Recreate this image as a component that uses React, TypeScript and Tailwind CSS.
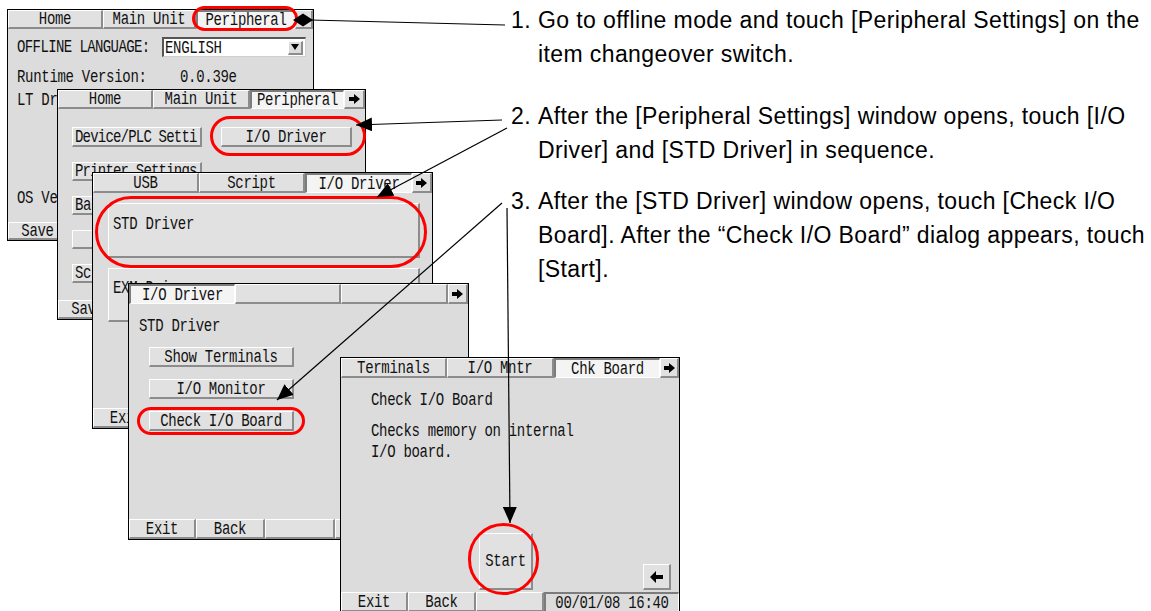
import React from "react";

const mono = "font-['Liberation_Mono','DejaVu_Sans_Mono',monospace]";
const raised =
  "border-t border-l border-t-white border-l-white border-b-2 border-r-2 border-b-[#8c8c8c] border-r-[#8c8c8c]";
const sunken =
  "border-t-2 border-l-2 border-t-[#7c7c7c] border-l-[#7c7c7c] border-b border-r border-b-white border-r-white";

type TabDef = { label?: string; w?: string; active?: boolean; arrow?: boolean };

function T({ children, cls = "" }: { children?: React.ReactNode; cls?: string }) {
  return <span className={`inline-block scale-y-[1.25] whitespace-pre ${cls}`}>{children}</span>;
}

function ArrowRight() {
  return (
    <svg width="11" height="10" viewBox="0 0 11 10">
      <path d="M0 3h5V0l6 5-6 5V7H0z" fill="#000" />
    </svg>
  );
}

function ArrowLeft() {
  return (
    <svg width="13" height="12" viewBox="0 0 13 12">
      <path d="M13 4H6V0L0 6l6 6V8h7z" fill="#000" />
    </svg>
  );
}

function TabRow({ tabs, h }: { tabs: TabDef[]; h: string }) {
  return (
    <div className={`flex shrink-0 ${h}`}>
      {tabs.map((t, i) => (
        <div
          key={i}
          className={`${t.w ?? "flex-1"} flex items-center justify-center overflow-hidden ${
            t.active ? "bg-[#f4f4f4] " + sunken : "bg-[#e1e1e1] " + raised
          }`}
        >
          {t.arrow ? <ArrowRight /> : <T>{t.label}</T>}
        </div>
      ))}
    </div>
  );
}

function BottomRow({ items, h = "h-[20px]" }: { items: TabDef[]; h?: string }) {
  return (
    <div className={`flex shrink-0 mt-auto ${h}`}>
      {items.map((t, i) => (
        <div
          key={i}
          className={`${t.w ?? "flex-1"} flex items-center justify-center overflow-hidden bg-[#e1e1e1] ${raised}`}
        >
          <T>{t.label}</T>
        </div>
      ))}
    </div>
  );
}

function Win({ pos, children }: { pos: string; children: React.ReactNode }) {
  return (
    <div
      className={`absolute ${pos} border border-black bg-[#dcdcdc] flex flex-col overflow-hidden ${mono} text-[14px] leading-[18px] tracking-[-0.3px] text-[#111]`}
    >
      {children}
    </div>
  );
}

function Btn({
  cls,
  children,
  left,
  tight,
}: {
  cls: string;
  children?: React.ReactNode;
  left?: boolean;
  tight?: boolean;
}) {
  return (
    <div
      className={`${cls} shrink-0 flex items-center overflow-hidden bg-[#e1e1e1] ${raised} ${
        left ? "justify-start pl-[2px]" : "justify-center"
      }`}
    >
      <T cls={tight ? "tracking-[-0.8px]" : ""}>{children}</T>
    </div>
  );
}

export default function App() {
  return (
    <div className="relative w-[1151px] h-[611px] overflow-hidden bg-white">
      {/* steps */}
      <ol className="ml-[511px] pt-[3px] font-['Liberation_Sans',Arial,sans-serif] text-[23px] leading-[34px] tracking-[0.4px] text-black whitespace-nowrap">
        <li className="flex">
          <span className="w-[27px] shrink-0">1.</span>
          <span>
            Go to offline mode and touch [Peripheral Settings] on the
            <br />
            item changeover switch.
          </span>
        </li>
        <li className="flex mt-[28px]">
          <span className="w-[27px] shrink-0">2.</span>
          <span>
            After the [Peripheral Settings] window opens, touch [I/O
            <br />
            Driver] and [STD Driver] in sequence.
          </span>
        </li>
        <li className="flex mt-[17px]">
          <span className="w-[27px] shrink-0">3.</span>
          <span>
            After the [STD Driver] window opens, touch [Check I/O
            <br />
            Board]. After the “Check I/O Board” dialog appears, touch
            <br />
            [Start].
          </span>
        </li>
      </ol>

      {/* window 1: offline home */}
      <Win pos="left-[7px] top-[9px] w-[307px] h-[232px]">
        <TabRow
          h="h-[19px]"
          tabs={[
            { label: "Home", w: "w-[95px]" },
            { label: "Main Unit", w: "w-[93px]" },
            { label: "Peripheral", w: "w-[99px]", active: true },
            { arrow: true },
          ]}
        />
        <div className="flex flex-col pl-[9px]">
          <div className="flex items-center mt-[8px] h-[20px]">
            <div className="w-[145px] shrink-0">
              <T cls="tracking-[-0.6px]">OFFLINE LANGUAGE:</T>
            </div>
            <div className="w-[144px] h-[20px] bg-white border-t-2 border-l-2 border-t-[#555] border-l-[#555] border-b border-r border-b-[#cfcfcf] border-r-[#cfcfcf] flex items-center justify-between pl-[1px] pr-[2px]">
              <T>ENGLISH</T>
              <div className={`w-[15px] h-[14px] bg-[#dcdcdc] ${raised} flex items-center justify-center`}>
                <svg width="8" height="6" viewBox="0 0 8 6">
                  <path d="M0 0h8L4 6z" fill="#000" />
                </svg>
              </div>
            </div>
          </div>
          <div className="flex mt-[11px]">
            <div className="w-[163px] shrink-0">
              <T>Runtime Version:</T>
            </div>
            <T>0.0.39e</T>
          </div>
          <div className="mt-[5px]">
            <T>LT Driver</T>
          </div>
          <div className="mt-[80px]">
            <T>OS Version</T>
          </div>
        </div>
        <BottomRow
          h="h-[18px]"
          items={[{ label: "Save", w: "w-[60px]" }, { label: "", w: "w-[68px]" }, { label: "" }]}
        />
      </Win>

      {/* window 2: peripheral settings */}
      <Win pos="left-[57px] top-[89px] w-[309px] h-[231px]">
        <TabRow
          h="h-[19px]"
          tabs={[
            { label: "Home", w: "w-[95px]" },
            { label: "Main Unit", w: "w-[97px]" },
            { label: "Peripheral", w: "w-[94px]", active: true },
            { arrow: true },
          ]}
        />
        <div className="flex flex-col gap-[15px] mt-[18px] pl-[14px]">
          <div className="flex gap-[19px]">
            <Btn cls="w-[130px] h-[20px]" left tight>
              Device/PLC Setti
            </Btn>
            <Btn cls="w-[131px] h-[20px]">I/O Driver</Btn>
          </div>
          <Btn cls="w-[130px] h-[19px]" left tight>
            Printer Settings
          </Btn>
          <Btn cls="w-[130px] h-[19px]" left>
            Backup
          </Btn>
          <Btn cls="w-[130px] h-[19px]" left></Btn>
          <Btn cls="w-[130px] h-[19px]" left>
            Screen
          </Btn>
        </div>
        <BottomRow
          h="h-[19px]"
          items={[{ label: "Save", w: "w-[60px]" }, { label: "", w: "w-[68px]" }, { label: "" }]}
        />
      </Win>

      {/* window 3: I/O driver list */}
      <Win pos="left-[92px] top-[172px] w-[341px] h-[257px]">
        <TabRow
          h="h-[20px]"
          tabs={[
            { label: "USB", w: "w-[106px]" },
            { label: "Script", w: "w-[106px]" },
            { label: "I/O Driver", w: "w-[107px]", active: true },
            { arrow: true },
          ]}
        />
        <div className="flex flex-col gap-[10px] mt-[10px] pl-[15px]">
          <div className={`w-[312px] h-[55px] bg-[#e1e1e1] ${raised} pl-[4px] pt-[11px]`}>
            <T>STD Driver</T>
          </div>
          <div className={`w-[312px] h-[54px] bg-[#e1e1e1] ${raised} pl-[4px] pt-[10px]`}>
            <T>EXM Driver</T>
          </div>
        </div>
        <BottomRow
          items={[
            { label: "Exit", w: "w-[67px]" },
            { label: "Back", w: "w-[68px]" },
            { label: "", w: "w-[69px]" },
            { label: "" },
          ]}
        />
      </Win>

      {/* window 4: STD driver */}
      <Win pos="left-[128px] top-[283px] w-[341px] h-[257px]">
        <TabRow
          h="h-[20px]"
          tabs={[
            { label: "I/O Driver", w: "w-[106px]", active: true },
            { label: "", w: "w-[106px]" },
            { label: "", w: "w-[107px]" },
            { arrow: true },
          ]}
        />
        <div className="flex flex-col pl-[10px]">
          <div className="mt-[13px]">
            <T>STD Driver</T>
          </div>
          <div className="flex flex-col gap-[12px] mt-[12px] ml-[10px]">
            <Btn cls="w-[145px] h-[20px]">Show Terminals</Btn>
            <Btn cls="w-[145px] h-[20px]">I/O Monitor</Btn>
            <Btn cls="w-[145px] h-[20px]">Check I/O Board</Btn>
          </div>
        </div>
        <BottomRow
          items={[
            { label: "Exit", w: "w-[67px]" },
            { label: "Back", w: "w-[69px]" },
            { label: "", w: "w-[70px]" },
            { label: "" },
          ]}
        />
      </Win>

      {/* window 5: check I/O board */}
      <Win pos="left-[340px] top-[357px] w-[340px] h-[256px]">
        <TabRow
          h="h-[20px]"
          tabs={[
            { label: "Terminals", w: "w-[106px]" },
            { label: "I/O Mntr", w: "w-[107px]" },
            { label: "Chk Board", w: "w-[106px]", active: true },
            { arrow: true },
          ]}
        />
        <div className="flex-1 flex flex-col pl-[30px]">
          <div className="mt-[13px]">
            <T>Check I/O Board</T>
          </div>
          <div className="mt-[12px] leading-[21px]">
            <T>Checks memory on internal</T>
            <br />
            <T>I/O board.</T>
          </div>
          <div className="mt-auto flex items-end mb-[2px]">
            <Btn cls="ml-[108px] w-[54px] h-[57px]">Start</Btn>
            <div className={`ml-auto mr-[8px] w-[28px] h-[26px] bg-[#e1e1e1] ${raised} flex items-center justify-center`}>
              <ArrowLeft />
            </div>
          </div>
        </div>
        <div className="flex shrink-0 h-[20px]">
          {["Exit", "Back", ""].map((l, i) => (
            <div
              key={i}
              className={`${i === 0 ? "w-[67px]" : "w-[68px]"} flex items-center justify-center bg-[#e1e1e1] ${raised}`}
            >
              <T>{l}</T>
            </div>
          ))}
          <div className={`flex-1 flex items-center justify-center bg-[#dcdcdc] ${sunken}`}>
            <T>00/01/08 16:40</T>
          </div>
        </div>
      </Win>

      {/* red highlight rings */}
      <div className="absolute left-[192px] top-[6px] w-[106px] h-[25px] rounded-full border-[3px] border-[#f00]" />
      <div className="absolute left-[210px] top-[116px] w-[156px] h-[40px] rounded-full border-[3px] border-[#f00]" />
      <div className="absolute left-[95px] top-[196px] w-[332px] h-[72px] rounded-full border-[3px] border-[#f00]" />
      <div className="absolute left-[137px] top-[407px] w-[168px] h-[28px] rounded-full border-[3px] border-[#f00]" />
      <div className="absolute left-[468px] top-[523px] w-[71px] h-[72px] rounded-full border-[3px] border-[#f00]" />

      {/* leader lines */}
      <svg className="absolute inset-0 pointer-events-none" width="1151" height="611" viewBox="0 0 1151 611">
        <defs>
          <marker
            id="ah"
            viewBox="0 0 16 14"
            markerWidth="16"
            markerHeight="14"
            refX="16"
            refY="7"
            orient="auto"
            markerUnits="userSpaceOnUse"
          >
            <path d="M0 0L16 7L0 14z" fill="#000" />
          </marker>
        </defs>
        <g stroke="#000" strokeWidth="1.2" fill="none">
          <line x1="505" y1="25" x2="310" y2="20" />
          <line x1="502" y1="120" x2="356" y2="125" markerEnd="url(#ah)" />
          <line x1="507" y1="128" x2="377" y2="197" markerEnd="url(#ah)" />
          <line x1="502" y1="203" x2="277" y2="400" markerEnd="url(#ah)" />
          <line x1="507" y1="208" x2="510" y2="523" markerEnd="url(#ah)" />
        </g>
        <path d="M293 20L303 13.5L313 20L303 26.5z" fill="#000" />
      </svg>
    </div>
  );
}
